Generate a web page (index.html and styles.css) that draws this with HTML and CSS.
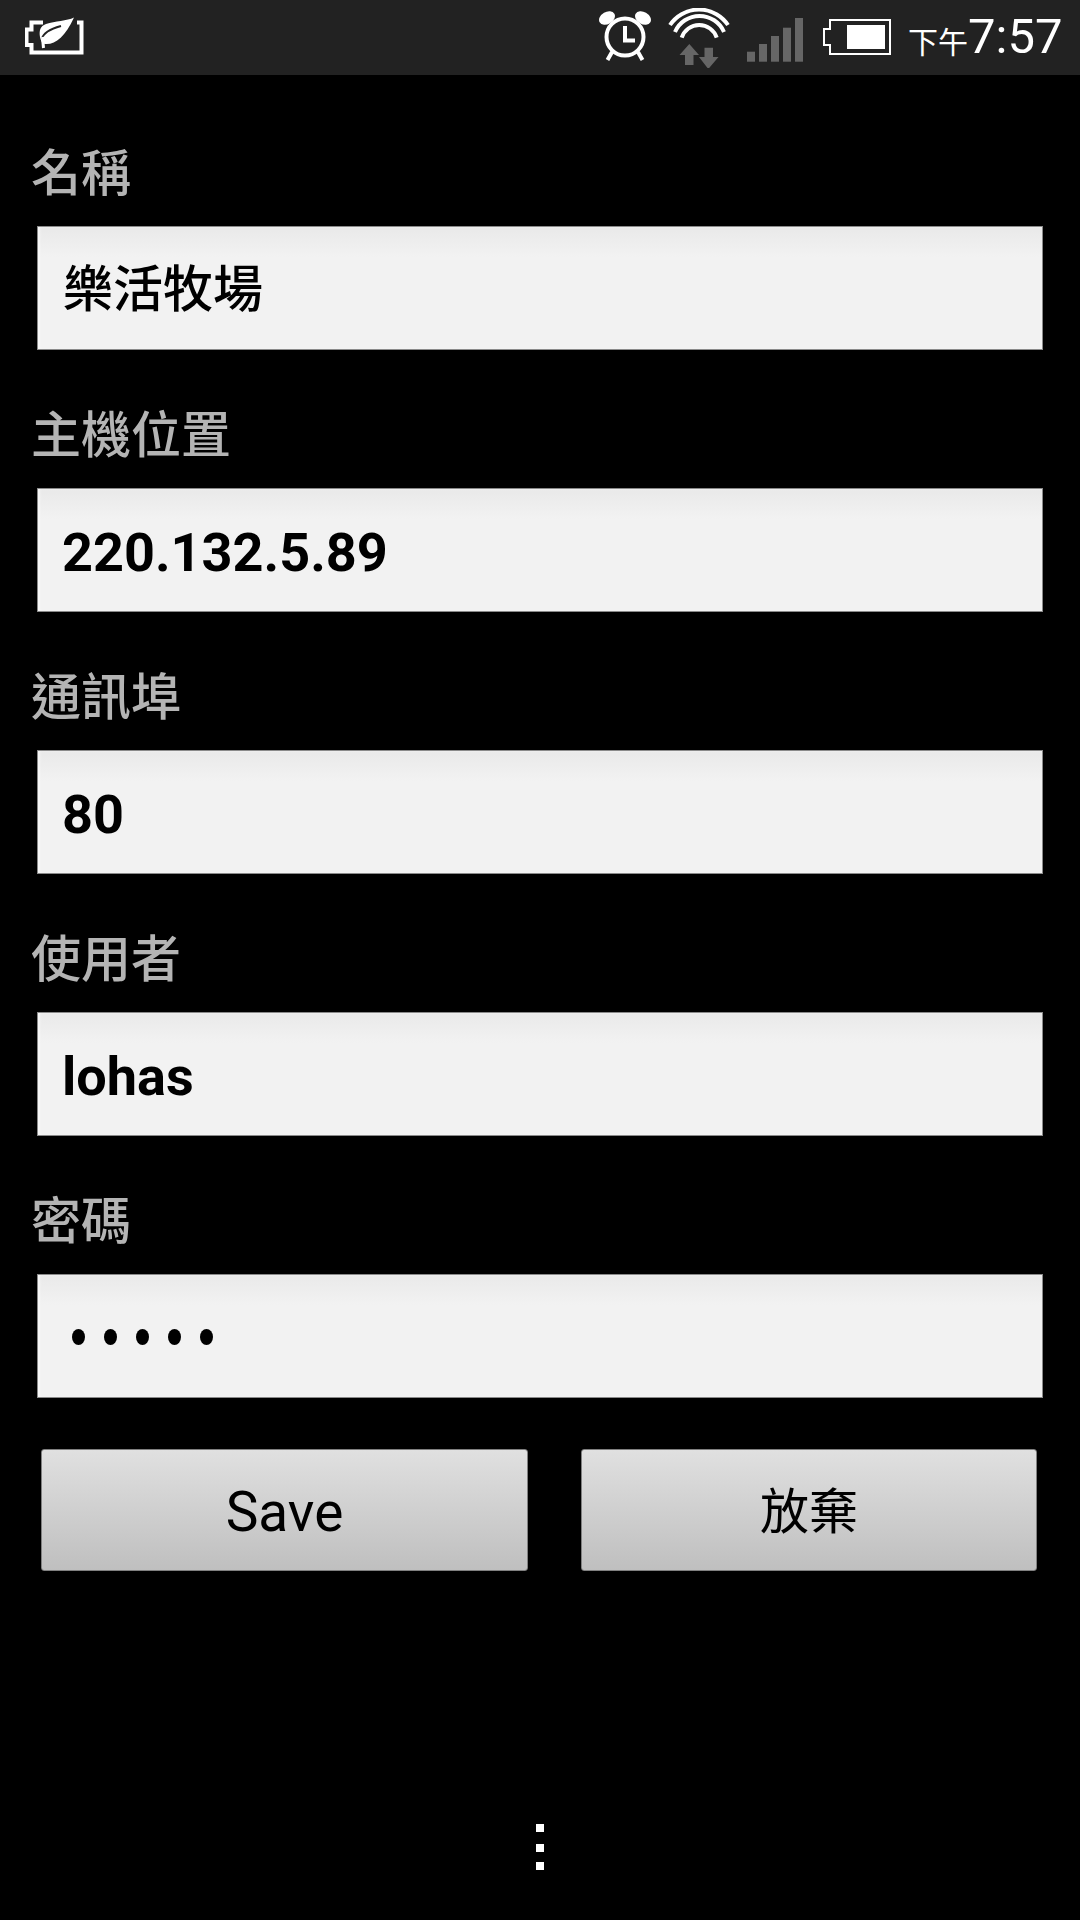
FILE: index.html
```html
<!DOCTYPE html>
<html lang="zh-Hant">
<head>
    <meta charset="UTF-8">
    <meta name="viewport" content="width=device-width, initial-scale=1.0">
    <title>設定</title>
    <link rel="stylesheet" href="styles.css">
</head>
<body>
    <header class="status-bar">
        <svg class="icon-leaf" viewBox="0 0 60 40">
            <path class="line" d="M18,5.5 H6.5 V12.5 H1.5 V28 H6.5 V35.5 H56.5 V5.5 H52"/>
            <path class="solid" d="M49,0.5 C42,4 30,4 21,7 C15,9 14,14 15,20 C16,24 17,27 20,27 C30,28 40,20 49,0.5 Z"/>
            <path class="vein" d="M17,22 C18,16 25,12 36,9"/>
            <path class="stem" d="M17.5,20 L18.5,31"/>
        </svg>
        <svg class="icon-alarm" viewBox="0 0 52 52">
            <ellipse class="solid" cx="8" cy="7" rx="8.5" ry="6" transform="rotate(-30 8 7)"/>
            <ellipse class="solid" cx="44" cy="7" rx="8.5" ry="6" transform="rotate(30 44 7)"/>
            <circle class="line" cx="26" cy="26" r="18.5"/>
            <path class="line" d="M26,15 V29.5 H36"/>
            <path class="line" d="M13,41 L8.5,49 M39,41 L43.5,49"/>
        </svg>
        <svg class="icon-wifi" viewBox="0 0 62 60">
            <path class="line" d="M2,17 A34.9,34.9 0 0 1 60,17"/>
            <path class="line" d="M7,24 A26.7,26.7 0 0 1 56,24"/>
            <path class="line" d="M13.7,29.7 A18.4,18.4 0 0 1 48.7,29.7"/>
            <path class="dim" d="M21.3,36 L31,47 H25.5 V57 H17 V47 H11.5 Z"/>
            <path class="dim" d="M40.3,61 L50.5,49 H45 V39.7 H36.5 V49 H31 Z"/>
        </svg>
        <svg class="icon-signal" viewBox="0 0 56 44">
            <rect class="dim" x="0" y="33.7" width="8" height="10"/>
            <rect class="dim" x="12" y="26" width="8" height="17.7"/>
            <rect class="dim" x="24" y="18" width="8" height="25.7"/>
            <rect class="dim" x="36" y="9.7" width="8" height="34"/>
            <rect class="dim" x="48" y="0" width="8" height="43.7"/>
        </svg>
        <svg class="icon-battery" viewBox="0 0 68 36">
            <path class="line-thin" d="M7,1 H67 V35 H7 V26 H1 V10 H7 Z"/>
            <rect class="solid" x="24" y="6" width="38" height="24"/>
        </svg>
        <div class="clock"><span class="clock-ampm">下午</span><span class="clock-time">7:57</span></div>
    </header>

    <main class="form">
        <div class="field">
            <div class="field-label">名稱</div>
            <div class="field-input"><span class="value-cjk">樂活牧場</span></div>
        </div>
        <div class="field">
            <div class="field-label">主機位置</div>
            <div class="field-input"><span class="value-latin">220.132.5.89</span></div>
        </div>
        <div class="field">
            <div class="field-label">通訊埠</div>
            <div class="field-input"><span class="value-latin">80</span></div>
        </div>
        <div class="field">
            <div class="field-label">使用者</div>
            <div class="field-input"><span class="value-latin">lohas</span></div>
        </div>
        <div class="field">
            <div class="field-label">密碼</div>
            <div class="field-input password">
                <span class="dot"></span>
                <span class="dot"></span>
                <span class="dot"></span>
                <span class="dot"></span>
                <span class="dot"></span>
            </div>
        </div>
        <div class="actions">
            <button class="btn btn-save">Save</button>
            <button class="btn btn-cancel">放棄</button>
        </div>
    </main>

    <div class="menu-dots">
        <span></span>
        <span></span>
        <span></span>
    </div>
</body>
</html>
```

FILE: styles.css
```css
body {
    margin: 0;
    width: 1080px;
    height: 1920px;
    overflow: hidden;
    background-color: #000;
    font-family: Roboto, "Noto Sans CJK TC", sans-serif;
}

/* status bar */
.status-bar {
    display: flex;
    align-items: flex-start;
    height: 75px;
    background-color: #222;
    color: #fff;
}

.status-bar svg {
    display: block;
    flex: none;
}

.line {
    fill: none;
    stroke: #fff;
    stroke-width: 4;
}

.line-thin {
    fill: none;
    stroke: #fff;
    stroke-width: 2;
}

.solid {
    fill: #fff;
}

.dim {
    fill: #666;
}

.vein {
    fill: none;
    stroke: #222;
    stroke-width: 2;
}

.stem {
    fill: none;
    stroke: #fff;
    stroke-width: 3;
}

.icon-leaf {
    width: 60px;
    height: 40px;
    margin: 17px 514px 0 25px;
}

.icon-alarm {
    width: 52px;
    height: 52px;
    margin: 11px 17px 0 0;
}

.icon-wifi {
    width: 62px;
    height: 60px;
    margin: 8px 17px 0 0;
}

.icon-signal {
    width: 56px;
    height: 44px;
    margin: 18px 20px 0 0;
}

.icon-battery {
    width: 68px;
    height: 36px;
    margin: 19px 17px 0 0;
}

.clock {
    display: flex;
    align-items: baseline;
    margin-top: 7px;
    line-height: 60px;
}

.clock-ampm {
    font-size: 30px;
}

.clock-time {
    font-size: 49px;
}

/* form */
.form {
    padding: 67px 37px 0;
}

.field {
    margin-bottom: 54px;
}

.field-label {
    margin: 0 0 24px -6px;
    height: 60px;
    line-height: 65px;
    font-size: 50px;
    font-weight: 500;
    color: #b4b4b4;
}

.field-input {
    display: flex;
    align-items: center;
    box-sizing: border-box;
    height: 124px;
    padding: 0 24px;
    border: 1px solid #8a8a8a;
    background: linear-gradient(#e9e9e9, #f2f2f2 30px);
    box-shadow: inset 2px 0 2px #f8f8f8;
    color: #000;
}

.value-latin {
    margin-top: 5px;
    font-size: 54px;
    font-weight: 700;
}

.value-cjk {
    margin-top: -7px;
    margin-left: 1px;
    font-size: 50px;
    font-weight: 500;
}

.password {
    gap: 19px;
    padding-left: 34px;
}

.dot {
    width: 13px;
    height: 16px;
    margin-top: 1px;
    border-radius: 50%;
    background-color: #000;
}

.actions {
    display: flex;
    gap: 53px;
    margin: -3px 6px 0 4px;
}

.btn {
    height: 122px;
    padding: 0;
    border: 1px solid #808080;
    border-radius: 3px;
    background: linear-gradient(#e0e0e0, #bfbfbf);
    font-family: inherit;
    color: #000;
}

.btn-save {
    width: 487px;
    padding-top: 4px;
    font-size: 55px;
}

.btn-cancel {
    width: 456px;
    padding-bottom: 6px;
    font-size: 49px;
}

/* overflow menu */
.menu-dots {
    display: flex;
    flex-direction: column;
    align-items: center;
    margin-top: 253px;
}

.menu-dots span {
    width: 8px;
    height: 8px;
    margin-bottom: 12px;
    background-color: #fff;
}

.menu-dots span:nth-child(2) {
    margin-bottom: 10px;
}
```
